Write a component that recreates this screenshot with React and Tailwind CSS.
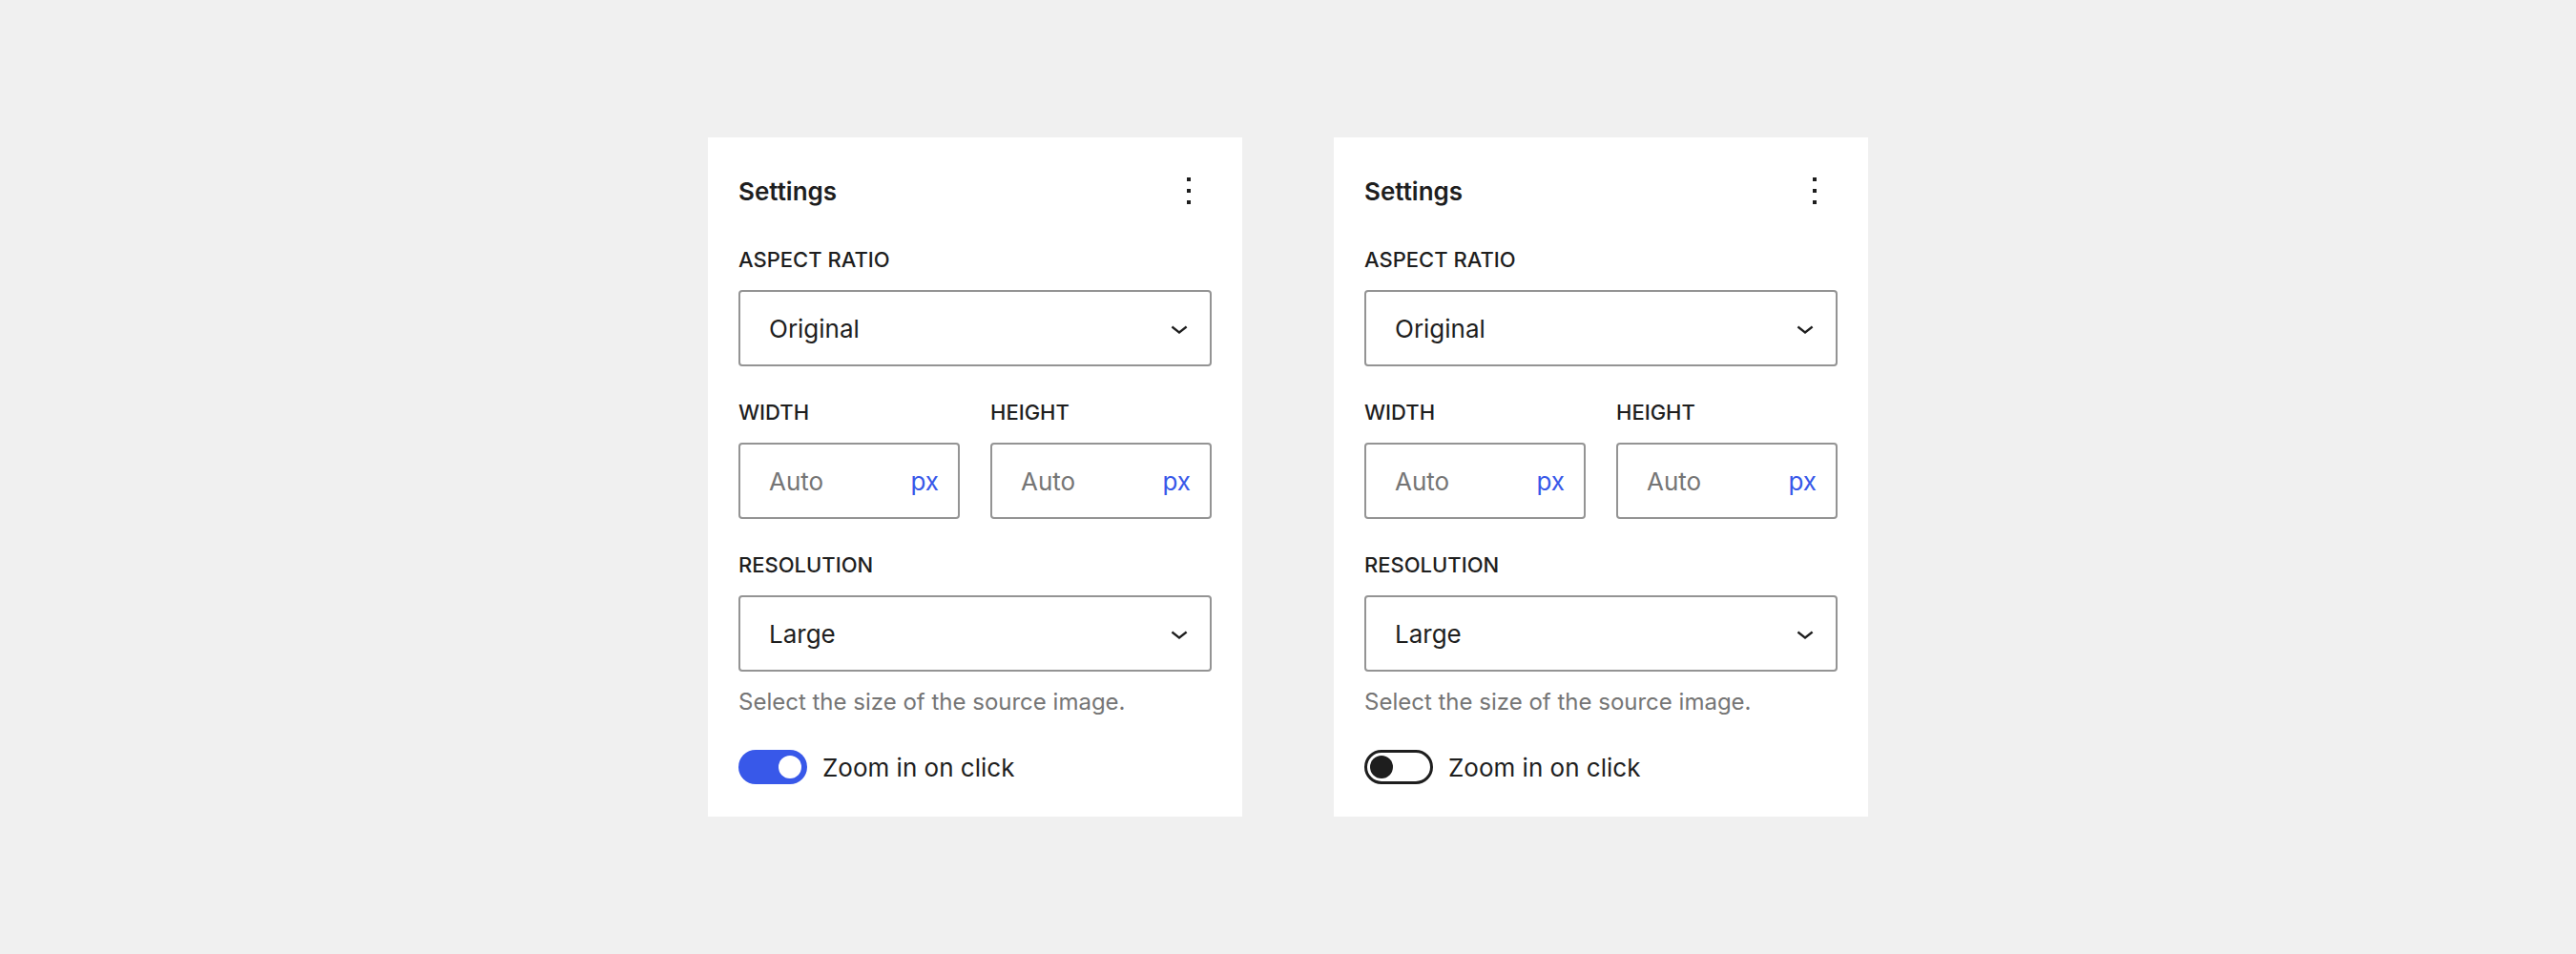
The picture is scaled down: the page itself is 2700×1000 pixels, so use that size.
import React from "react";

function Chevron() {
  return (
    <svg viewBox="0 0 24 24" className="w-[36px] h-[36px] shrink-0" fill="#1e1e1e">
      <path d="M17.5 11.6L12 16l-5.5-4.4.9-1.2L12 14l4.6-3.6 1 1.2z" />
    </svg>
  );
}

function Kebab() {
  return (
    <svg viewBox="0 0 24 24" className="w-[48px] h-[48px]" fill="#1e1e1e">
      <path d="M13 19h-2v-2h2v2zm0-6h-2v-2h2v2zm0-6h-2V5h2v2z" />
    </svg>
  );
}

function Label({ children }) {
  return (
    <div className="h-[32px] leading-[32px] text-[22px] font-medium uppercase text-[#1e1e1e] mb-[16px]">
      {children}
    </div>
  );
}

function Select({ value }) {
  return (
    <div className="h-[80px] border-2 border-[#949494] rounded-[4px] flex items-center justify-between pl-[30px] pr-[14px] text-[26px] text-[#1e1e1e]">
      <span>{value}</span>
      <Chevron />
    </div>
  );
}

function NumberInput() {
  return (
    <div className="h-[80px] border-2 border-[#949494] rounded-[4px] flex items-center justify-between pl-[30px] pr-[20px] text-[26px]">
      <span className="text-[#757575]">Auto</span>
      <span className="text-[#3858e9]">px</span>
    </div>
  );
}

function Toggle({ checked }) {
  if (checked) {
    return (
      <div className="w-[72px] h-[36px] rounded-full bg-[#3858e9] flex items-center justify-end pr-[6px] shrink-0">
        <div className="w-[24px] h-[24px] rounded-full bg-white" />
      </div>
    );
  }
  return (
    <div className="w-[72px] h-[36px] rounded-full bg-white border-[3px] border-[#1e1e1e] flex items-center justify-start pl-[3px] shrink-0">
      <div className="w-[24px] h-[24px] rounded-full bg-[#1e1e1e]" />
    </div>
  );
}

function Panel({ checked }) {
  return (
    <div className="w-[560px] bg-white p-[32px] flex flex-col gap-[32px]">
      <div className="h-[48px] flex items-center justify-between">
        <span className="text-[26px] font-semibold text-[#1e1e1e]">Settings</span>
        <Kebab />
      </div>
      <div>
        <Label>Aspect ratio</Label>
        <Select value="Original" />
      </div>
      <div className="grid grid-cols-2 gap-[32px]">
        <div>
          <Label>Width</Label>
          <NumberInput />
        </div>
        <div>
          <Label>Height</Label>
          <NumberInput />
        </div>
      </div>
      <div>
        <Label>Resolution</Label>
        <Select value="Large" />
        <div className="mt-[16px] text-[24px] leading-[32px] text-[#757575]">
          Select the size of the source image.
        </div>
      </div>
      <div className="h-[40px] flex items-center gap-[16px]">
        <Toggle checked={checked} />
        <span className="text-[26px] text-[#1e1e1e]">Zoom in on click</span>
      </div>
    </div>
  );
}

export default function App() {
  return (
    <div className="w-full h-[1000px] bg-[#f0f0f0] flex items-center justify-center gap-[96px] font-['Inter',sans-serif]">
      <Panel checked={true} />
      <Panel checked={false} />
    </div>
  );
}
